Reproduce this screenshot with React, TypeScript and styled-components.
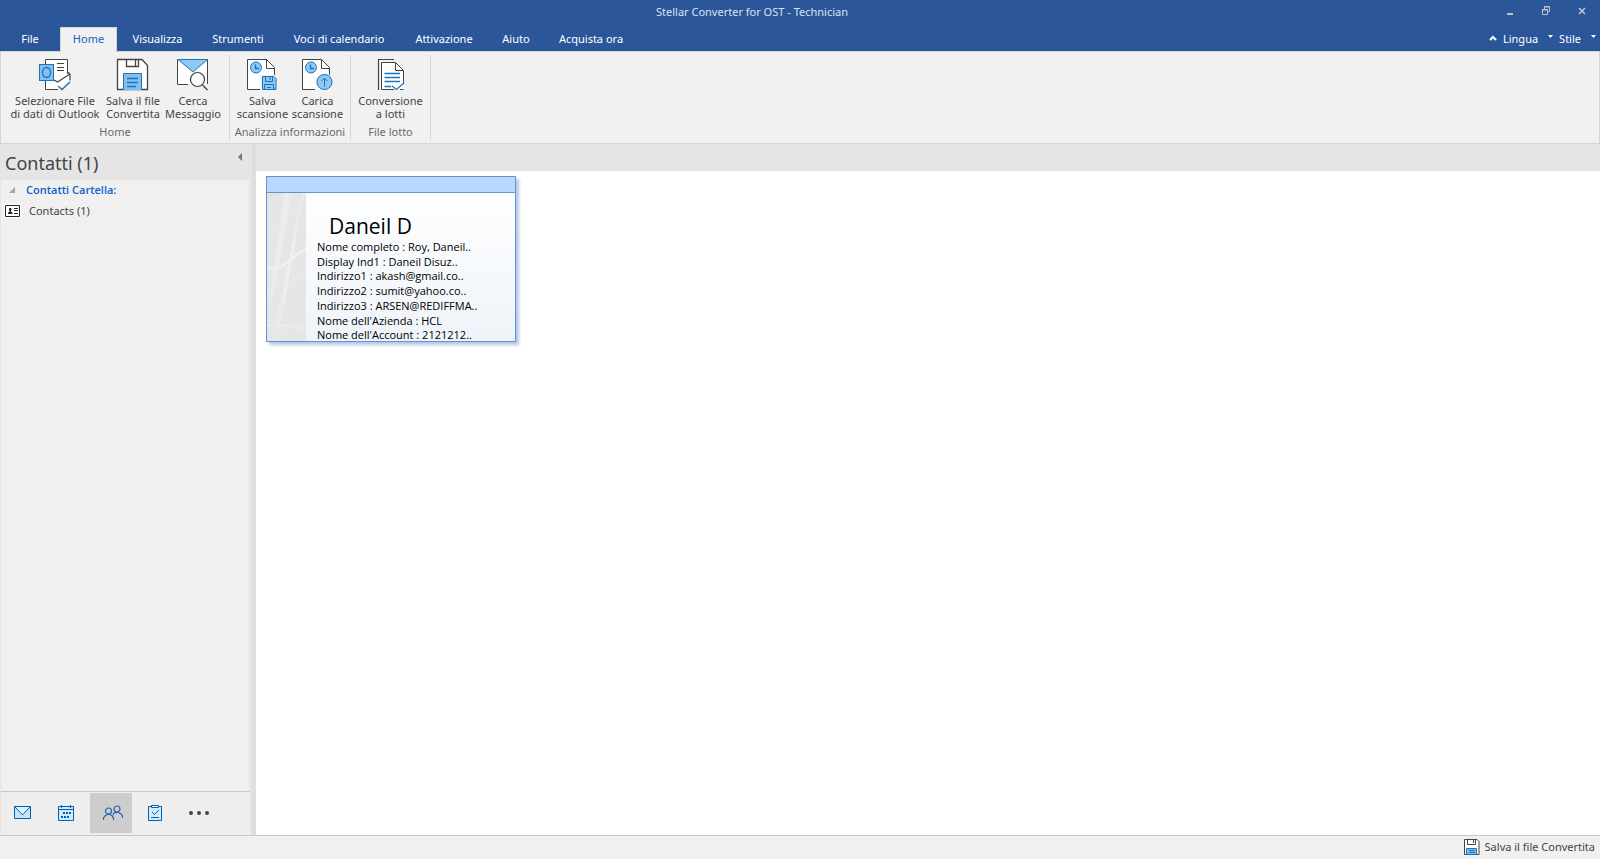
import React from "react";
import styled, { createGlobalStyle } from "styled-components";

const GlobalStyle = createGlobalStyle`
  *, *::before, *::after { box-sizing: border-box; }
  body {
    margin: 0;
    font-family: "Noto Sans", "Open Sans", sans-serif;
    font-size: 11px;
    line-height: 13px;
    color: #444444;
    background: #f0f0f0;
  }
  button {
    font: inherit;
    color: inherit;
    border: 0;
    padding: 0;
    margin: 0;
    background: none;
    white-space: nowrap;
  }
  svg { display: block; flex: none; }
  h1, h2, h3, p { margin: 0; font-weight: 400; }
`;

const Window = styled.div`
  min-height: 100vh;
  display: flex;
  flex-direction: column;
`;

const TitleBar = styled.header`
  display: grid;
  grid-template-columns: 1fr auto 1fr;
  height: 27px;
  background: #2b579a;
  color: #dbe2ee;
`;

const Title = styled.h1`
  grid-column: 2;
  padding-right: 96px;
  font-size: 11px;
  line-height: 23px;
`;

const WindowControls = styled.div`
  display: flex;
  justify-content: flex-end;
  align-items: flex-start;
`;

const WindowButton = styled.button`
  display: flex;
  justify-content: center;
  align-items: center;
  width: 36px;
  height: 21px;
  color: #c3c3c3;
`;

const TabBar = styled.nav`
  display: flex;
  height: 24px;
  background: #2b579a;
  color: #ffffff;
`;

const Tab = styled.button<{ $active?: boolean; $width: number }>`
  position: relative;
  display: flex;
  justify-content: center;
  width: ${(p) => p.$width}px;
  height: ${(p) => (p.$active ? 25 : 24)}px;
  line-height: 22px;
  color: ${(p) => (p.$active ? "#0f5fcb" : "#ffffff")};
  background: ${(p) => (p.$active ? "#f1f1f1" : "transparent")};
  border: 1px solid ${(p) => (p.$active ? "#d4d4d4" : "transparent")};
  border-bottom: 0;
  z-index: 1;
`;

const TabTools = styled.div`
  display: flex;
  align-items: center;
  gap: 6px;
  margin-left: auto;
  padding-right: 4px;
`;

const ToolButton = styled.button`
  display: flex;
  align-items: center;
  gap: 10px;
  line-height: 24px;
`;

const Ribbon = styled.section`
  display: flex;
  height: 93px;
  padding: 3px 0 3px;
  background: #f1f1f1;
  border: 1px solid #d4d4d4;
`;

const Group = styled.div<{ $width: number }>`
  display: flex;
  flex-direction: column;
  justify-content: space-between;
  align-items: center;
  width: ${(p) => p.$width}px;
  padding-top: 3px;
  border-right: 1px solid #d4d4d4;
`;

const GroupButtons = styled.div`
  display: flex;
  justify-content: center;
`;

const RibbonButton = styled.button<{ $width: number }>`
  display: flex;
  flex-direction: column;
  align-items: center;
  gap: 2px;
  width: ${(p) => p.$width}px;
  line-height: 13px;
`;

const GroupLabel = styled.h2`
  font-size: 11px;
  line-height: 16px;
  color: #6a6a6a;
  white-space: nowrap;
`;

const Workspace = styled.div`
  flex: 1;
  display: flex;
`;

const Sidebar = styled.aside`
  display: flex;
  flex-direction: column;
  width: 250px;
  border-left: 1px solid #e5e5e5;
  background: #f0f0f0;
`;

const SidebarHeader = styled.div`
  display: flex;
  justify-content: space-between;
  height: 36px;
  padding: 0 4px;
  background: #e5e5e5;
`;

const SidebarTitle = styled.h2`
  font-size: 18px;
  line-height: 38px;
`;

const CollapseButton = styled.button`
  width: 8px;
  height: 26px;
`;

const Tree = styled.div`
  flex: 1;
  border-right: 1px solid #e5e5e5;
`;

const TreeHeading = styled.button`
  display: flex;
  align-items: center;
  gap: 11px;
  height: 20px;
  padding-left: 8px;
  font-family: "Open Sans", "Noto Sans", sans-serif;
  font-weight: 600;
  line-height: 12px;
  color: #0f5fcb;
`;

const TreeItem = styled.button`
  display: flex;
  align-items: center;
  gap: 8px;
  height: 22px;
  padding-left: 3px;
  line-height: 12px;
`;

const NavBar = styled.nav`
  display: flex;
  height: 44px;
  padding: 1px 0 2px;
  border-top: 1px solid #c8c8c8;
  background: #eeeeee;
`;

const NavButton = styled.button<{ $active?: boolean }>`
  display: flex;
  align-items: center;
  justify-content: center;
  width: 42px;
  margin-right: 2px;
  background: ${(p) => (p.$active ? "#cdcdcd" : "transparent")};

  &:first-child { margin-right: 3px; }
`;

const Splitter = styled.div`
  width: 6px;
  border-left: 2px solid #e5e5e5;
  background: #dedede;
`;

const Content = styled.main`
  flex: 1;
  background: #ffffff;
`;

const ContentHeader = styled.div`
  height: 27px;
  background: #e5e5e5;
`;

const Cards = styled.div`
  display: flex;
  flex-wrap: wrap;
  padding: 5px 10px;
`;

const Card = styled.article`
  width: 250px;
  border: 1px solid #6692d1;
  background: linear-gradient(#ffffff, #eff4fa);
  box-shadow: 3px 3px 3px #b4c8e4;
`;

const CardBar = styled.div`
  height: 16px;
  background: #b9d7ff;
  border-bottom: 1px solid #6692d1;
`;

const CardBody = styled.div`
  display: flex;
  height: 148px;
`;

const CardText = styled.div`
  padding: 19px 0 0 11px;
  font-family: "Open Sans", "Noto Sans", sans-serif;
  color: #000000;
`;

const CardName = styled.h3`
  padding-left: 12px;
  font-size: 21px;
  line-height: 28px;
`;

const CardFields = styled.div`
  display: grid;
  grid-template-rows: repeat(7, 1fr);
  height: 103px;
  line-height: 14px;
  white-space: nowrap;
`;

const StatusBar = styled.footer`
  display: flex;
  justify-content: flex-end;
  height: 24px;
  padding-right: 5px;
  border-top: 1px solid #c8c8c8;
  background: #f0f0f0;
`;

const StatusButton = styled.button`
  display: flex;
  align-items: center;
  gap: 5px;
  height: 22px;
  line-height: 12px;
`;

const DARK = "#444444";
const BLUE = "#1a73bd";
const SKY = "#83beec";

const OutlookIcon = () => (
  <svg width="34" height="34" viewBox="0 0 34 34" fill="none">
    <path d="M8 2H29.500V16L32 14V22L27 26L22 29L20 31H8Z" fill="#fff" />
    <path d="M7.500 6V1.500H29.500V16M7.500 22V31.500H20" stroke={DARK} />
    <path d="M16 22L19.500 24L32 16M29.500 14L32 16V22.500" stroke={DARK} strokeWidth="1.200" />
    <path d="M19 5.500H26M19 9.500H26M19 12.500H26" stroke={DARK} />
    <rect x="1.500" y="6.500" width="14" height="16" fill={SKY} stroke={BLUE} />
    <ellipse cx="8.500" cy="14.500" rx="4" ry="5" stroke={BLUE} strokeWidth="1.300" />
    <path d="M20 28L24 31.500L32 24" stroke={BLUE} strokeWidth="1.300" />
  </svg>
);

const SaveIcon = () => (
  <svg width="34" height="34" viewBox="0 0 34 34" fill="none">
    <path d="M1.500 1.500H26L31.500 7.500V31.500H1.500Z" fill="#fff" stroke={DARK} strokeWidth="1.300" />
    <path d="M10.500 1.500V8.500H22.500V1.500M19.500 2V8" stroke={DARK} strokeWidth="1.300" />
    <path d="M7.500 32V15.500H25.500V32" fill={SKY} stroke={BLUE} />
    <path d="M11 20.500H22M11 24.500H22M11 28.500H20" stroke={BLUE} strokeWidth="1.300" />
  </svg>
);

const SmallSaveIcon = () => (
  <svg width="16" height="16" viewBox="0 0 16 16" fill="none">
    <path d="M.5.500H13L15 2.500V15.500H.5Z" fill="#fff" stroke={DARK} />
    <path d="M3.500.500V5.500H11.500V.500M9.500 1V4" stroke={DARK} />
    <path d="M2.500 15.500V9.500H12.500V15.500Z" fill={SKY} stroke={BLUE} />
    <path d="M5 11.500H11M5 13.500H11" stroke={BLUE} />
  </svg>
);

const SearchMailIcon = () => (
  <svg width="34" height="34" viewBox="0 0 34 34" fill="none">
    <path d="M1.500 1.500H31.500V26H1.500Z" fill="#fff" />
    <path d="M12 26.500H1.500V1.500H31.500V26" stroke={DARK} />
    <path d="M2 1.500H31.500L17 14Z" fill="#8fc9f3" stroke={BLUE} />
    <circle cx="21.500" cy="21.500" r="8.500" fill="#f1f1f1" />
    <circle cx="21.500" cy="21.500" r="7" fill="#fafafa" stroke={DARK} strokeWidth="1.200" />
    <path d="M26.500 27L31.500 32" stroke={DARK} strokeWidth="1.400" />
  </svg>
);

const ScanPage = () => (
  <>
    <path d="M1.500 1.500H20.500L28.500 9.500V31.500H1.500Z" fill="#fff" />
    <path d="M14 31.500H1.500V1.500H20.500L28.500 9.500V18" stroke={DARK} />
    <path d="M20.500 1.500V10.500H28.500" stroke={DARK} />
    <circle cx="10" cy="9.500" r="5.500" fill="#8fc9f3" stroke={BLUE} />
    <path d="M9.500 6.500V10.500H13" stroke={BLUE} strokeWidth="1.300" />
  </>
);

const SaveScanIcon = () => (
  <svg width="34" height="34" viewBox="0 0 34 34" fill="none">
    <ScanPage />
    <path d="M14.500 17H31V33H14.500Z" fill="#f1f1f1" />
    <path d="M16.500 18.500H28L30 20.500V31.500H16.500Z" fill="#8fc9f3" stroke={BLUE} />
    <path d="M19.500 19V23.500H26.500V19M24 19V22M18.500 31V26.500H27.500V31" stroke={BLUE} />
    <path d="M21 29.500H25" stroke={BLUE} />
  </svg>
);

const LoadScanIcon = () => (
  <svg width="34" height="34" viewBox="0 0 34 34" fill="none">
    <ScanPage />
    <circle cx="23.500" cy="24" r="9" fill="#f1f1f1" />
    <circle cx="23.500" cy="24" r="7.500" fill="#8fc9f3" stroke={BLUE} />
    <path d="M23.500 28.500V20.500M20.500 23L23.500 20L26.500 23" stroke={BLUE} />
  </svg>
);

const BatchIcon = () => (
  <svg width="34" height="34" viewBox="0 0 34 34" fill="none">
    <path d="M4.500 32V1.500H20" stroke={DARK} strokeWidth="1.200" />
    <path d="M7.500 4.500H21.500L29.500 12.500V31.500H7.500Z" fill="#fff" />
    <path d="M20 31.500H7.500V4.500H21.500L29.500 12.500V25M29.500 31.500H26" stroke={DARK} />
    <path d="M21.500 4.500V12.500H29.500" stroke={DARK} />
    <path d="M10.500 15.500H26M10.500 19.500H26M10.500 23.500H26M10.500 28.500H17M18 28L22.500 31.500L30 25" stroke={BLUE} strokeWidth="1.300" />
  </svg>
);

const ContactCardIcon = () => (
  <svg width="17" height="14" viewBox="0 0 17 14" fill="none">
    <path d="M0 0H17V14H0Z" fill="#fff" />
    <path d="M1.500 1.500H15.500V12.500H1.500Z" stroke="#222" />
    <path d="M4 10V8.500L5.500 8V7L5 6V4.500L6 4H7L7.500 5V6L7 7V8L8.500 8.500V10Z" fill="#222" />
    <path d="M10 4.500H14M10 6.500H14M10 9.500H14" stroke="#222" />
  </svg>
);

const MailIcon = () => (
  <svg width="17" height="14" viewBox="0 0 17 14" fill="none">
    <path d="M.5.500H16.500V12.500H.5Z" fill="#c9e2fa" stroke="#0063b1" />
    <path d="M1 1L8.500 9L16 1" fill="#ddeefc" stroke="#0063b1" />
  </svg>
);

const CalendarIcon = () => (
  <svg width="18" height="16" viewBox="0 0 18 16" fill="none">
    <path d="M.5 1.500H15.500V15.500H.5Z" fill="#d6e9fb" stroke="#0063b1" />
    <path d="M.5 4.500H15.500M3.500 0V3M12.500 0V3" stroke="#0063b1" />
    <path d="M5 8H13M3 12H11" stroke="#0063b1" strokeWidth="2" strokeDasharray="2 1" />
  </svg>
);

const PeopleIcon = () => (
  <svg width="24" height="16" viewBox="0 0 24 16" fill="none" stroke="#1f65a8" strokeWidth="1.200">
    <circle cx="9.500" cy="6" r="3" />
    <path d="M4.500 15V13L6.500 10.500L8.500 9.500H10.500L13 10.500L14.500 13V15" />
    <circle cx="18" cy="4" r="3" />
    <path d="M14 10L15 8L17 7.500H19.500L22 9L23.500 11V13" />
  </svg>
);

const TaskIcon = () => (
  <svg width="14" height="16" viewBox="0 0 14 16" fill="none">
    <path d="M.5 1.500H13.500V15.500H.5Z" fill="#d6e9fb" stroke="#0063b1" />
    <path d="M3.500.500H10.500V2.500H3.500Z" fill="#fff" stroke="#0063b1" />
    <path d="M4 7L6.500 9.500L11 5M3 12.500H11" stroke="#0063b1" />
  </svg>
);

const MoreIcon = () => (
  <svg width="20" height="4" viewBox="0 0 20 4" fill="#444">
    <circle cx="2" cy="2" r="2" />
    <circle cx="10" cy="2" r="2" />
    <circle cx="18" cy="2" r="2" />
  </svg>
);

const Caret = () => (
  <svg width="5" height="12" viewBox="0 0 5 12">
    <path d="M0 2H5L2.500 5Z" fill="#fff" />
  </svg>
);

const CardArt = () => (
  <svg width="39" height="148" viewBox="0 0 39 148" fill="none">
    <path d="M0 0H39V148H0Z" fill="#e3e3e3" />
    <path d="M3 4L8 9L20 3L22 0H39V148H0V10Z" fill="#e6e6e6" />
    <path d="M17 0H25L8 96L2 112Z" fill="#ececec" />
    <path d="M5 8L16 2" stroke="#efefef" />
    <path d="M0 75Q12 77 22 68T39 57" stroke="#f0f0f0" strokeWidth="3" />
    <path d="M37 0L5 148M33 8L9 148M0 98L39 80M0 127L39 138M0 132L39 134M20 132L8 148" stroke="#eeeeee" />
    <path d="M28 44L16 112" stroke="#f0f0f0" strokeWidth="2" />
  </svg>
);

const tabs = [
  { label: "File", width: 60 },
  { label: "Home", width: 57, active: true },
  { label: "Visualizza", width: 81 },
  { label: "Strumenti", width: 80 },
  { label: "Voci di calendario", width: 122 },
  { label: "Attivazione", width: 88 },
  { label: "Aiuto", width: 56 },
  { label: "Acquista ora", width: 94 },
];

const groups = [
  {
    label: "Home",
    width: 229,
    buttons: [
      { lines: ["Selezionare File", "di dati di Outlook"], width: 96, icon: <OutlookIcon /> },
      { lines: ["Salva il file", "Convertita"], width: 60, icon: <SaveIcon /> },
      { lines: ["Cerca", "Messaggio"], width: 60, icon: <SearchMailIcon /> },
    ],
  },
  {
    label: "Analizza informazioni",
    width: 121,
    buttons: [
      { lines: ["Salva", "scansione"], width: 55, icon: <SaveScanIcon /> },
      { lines: ["Carica", "scansione"], width: 55, icon: <LoadScanIcon /> },
    ],
  },
  {
    label: "File lotto",
    width: 80,
    buttons: [{ lines: ["Conversione", "a lotti"], width: 70, icon: <BatchIcon /> }],
  },
];

const fields = [
  "Nome completo : Roy, Daneil..",
  "Display Ind1 : Daneil Disuz..",
  "Indirizzo1 : akash@gmail.co..",
  "Indirizzo2 : sumit@yahoo.co..",
  "Indirizzo3 : ARSEN@REDIFFMA..",
  "Nome dell'Azienda : HCL",
  "Nome dell'Account : 2121212..",
];

export default function App() {
  return (
    <Window>
      <GlobalStyle />
      <TitleBar>
        <Title>Stellar Converter for OST - Technician</Title>
        <WindowControls>
          <WindowButton aria-label="Minimize">
            <svg width="8" height="8" viewBox="0 0 8 8"><path d="M1 6H7V8H1Z" fill="currentColor" /></svg>
          </WindowButton>
          <WindowButton aria-label="Restore">
            <svg width="8" height="9" viewBox="0 0 8 9" fill="none" stroke="currentColor">
              <path d="M2.500 3V.500H7.500V5.500H6M2 1H8M.5 3.500H5.500V8.500H.5ZM0 4H6" />
            </svg>
          </WindowButton>
          <WindowButton aria-label="Close">
            <svg width="8" height="8" viewBox="0 0 8 8"><path d="M1 1L7 7M7 1L1 7" stroke="currentColor" strokeWidth="1.600" /></svg>
          </WindowButton>
        </WindowControls>
      </TitleBar>
      <TabBar>
        {tabs.map((t) => (
          <Tab key={t.label} $active={t.active} $width={t.width}>{t.label}</Tab>
        ))}
        <TabTools>
          <ToolButton aria-label="Collapse ribbon">
            <svg width="8" height="8" viewBox="0 0 8 8"><path d="M1 5L4 2L7 5" fill="none" stroke="#fff" strokeWidth="2" /></svg>
          </ToolButton>
          <ToolButton>Lingua<Caret /></ToolButton>
          <ToolButton>Stile<Caret /></ToolButton>
        </TabTools>
      </TabBar>
      <Ribbon>
        {groups.map((g) => (
          <Group key={g.label} $width={g.width}>
            <GroupButtons>
              {g.buttons.map((b) => (
                <RibbonButton key={b.lines.join()} $width={b.width}>
                  {b.icon}
                  <span>{b.lines[0]}<br />{b.lines[1]}</span>
                </RibbonButton>
              ))}
            </GroupButtons>
            <GroupLabel>{g.label}</GroupLabel>
          </Group>
        ))}
      </Ribbon>
      <Workspace>
        <Sidebar>
          <SidebarHeader>
            <SidebarTitle>Contatti (1)</SidebarTitle>
            <CollapseButton aria-label="Collapse pane">
              <svg width="5" height="8" viewBox="0 0 5 8"><path d="M4 0V8L0 4Z" fill="#777" /></svg>
            </CollapseButton>
          </SidebarHeader>
          <Tree>
            <TreeHeading>
              <svg width="6" height="6" viewBox="0 0 6 6"><path d="M6 0V6H0Z" fill="#a6a6a6" /></svg>
              Contatti Cartella:
            </TreeHeading>
            <TreeItem><ContactCardIcon />Contacts (1)</TreeItem>
          </Tree>
          <NavBar>
            <NavButton aria-label="Mail"><MailIcon /></NavButton>
            <NavButton aria-label="Calendar"><CalendarIcon /></NavButton>
            <NavButton aria-label="People" $active><PeopleIcon /></NavButton>
            <NavButton aria-label="Tasks"><TaskIcon /></NavButton>
            <NavButton aria-label="More"><MoreIcon /></NavButton>
          </NavBar>
        </Sidebar>
        <Splitter />
        <Content>
          <ContentHeader />
          <Cards>
            <Card>
              <CardBar />
              <CardBody>
                <CardArt />
                <CardText>
                  <CardName>Daneil D</CardName>
                  <CardFields>
                    {fields.map((f) => <p key={f}>{f}</p>)}
                  </CardFields>
                </CardText>
              </CardBody>
            </Card>
          </Cards>
        </Content>
      </Workspace>
      <StatusBar>
        <StatusButton><SmallSaveIcon />Salva il file Convertita</StatusButton>
      </StatusBar>
    </Window>
  );
}
